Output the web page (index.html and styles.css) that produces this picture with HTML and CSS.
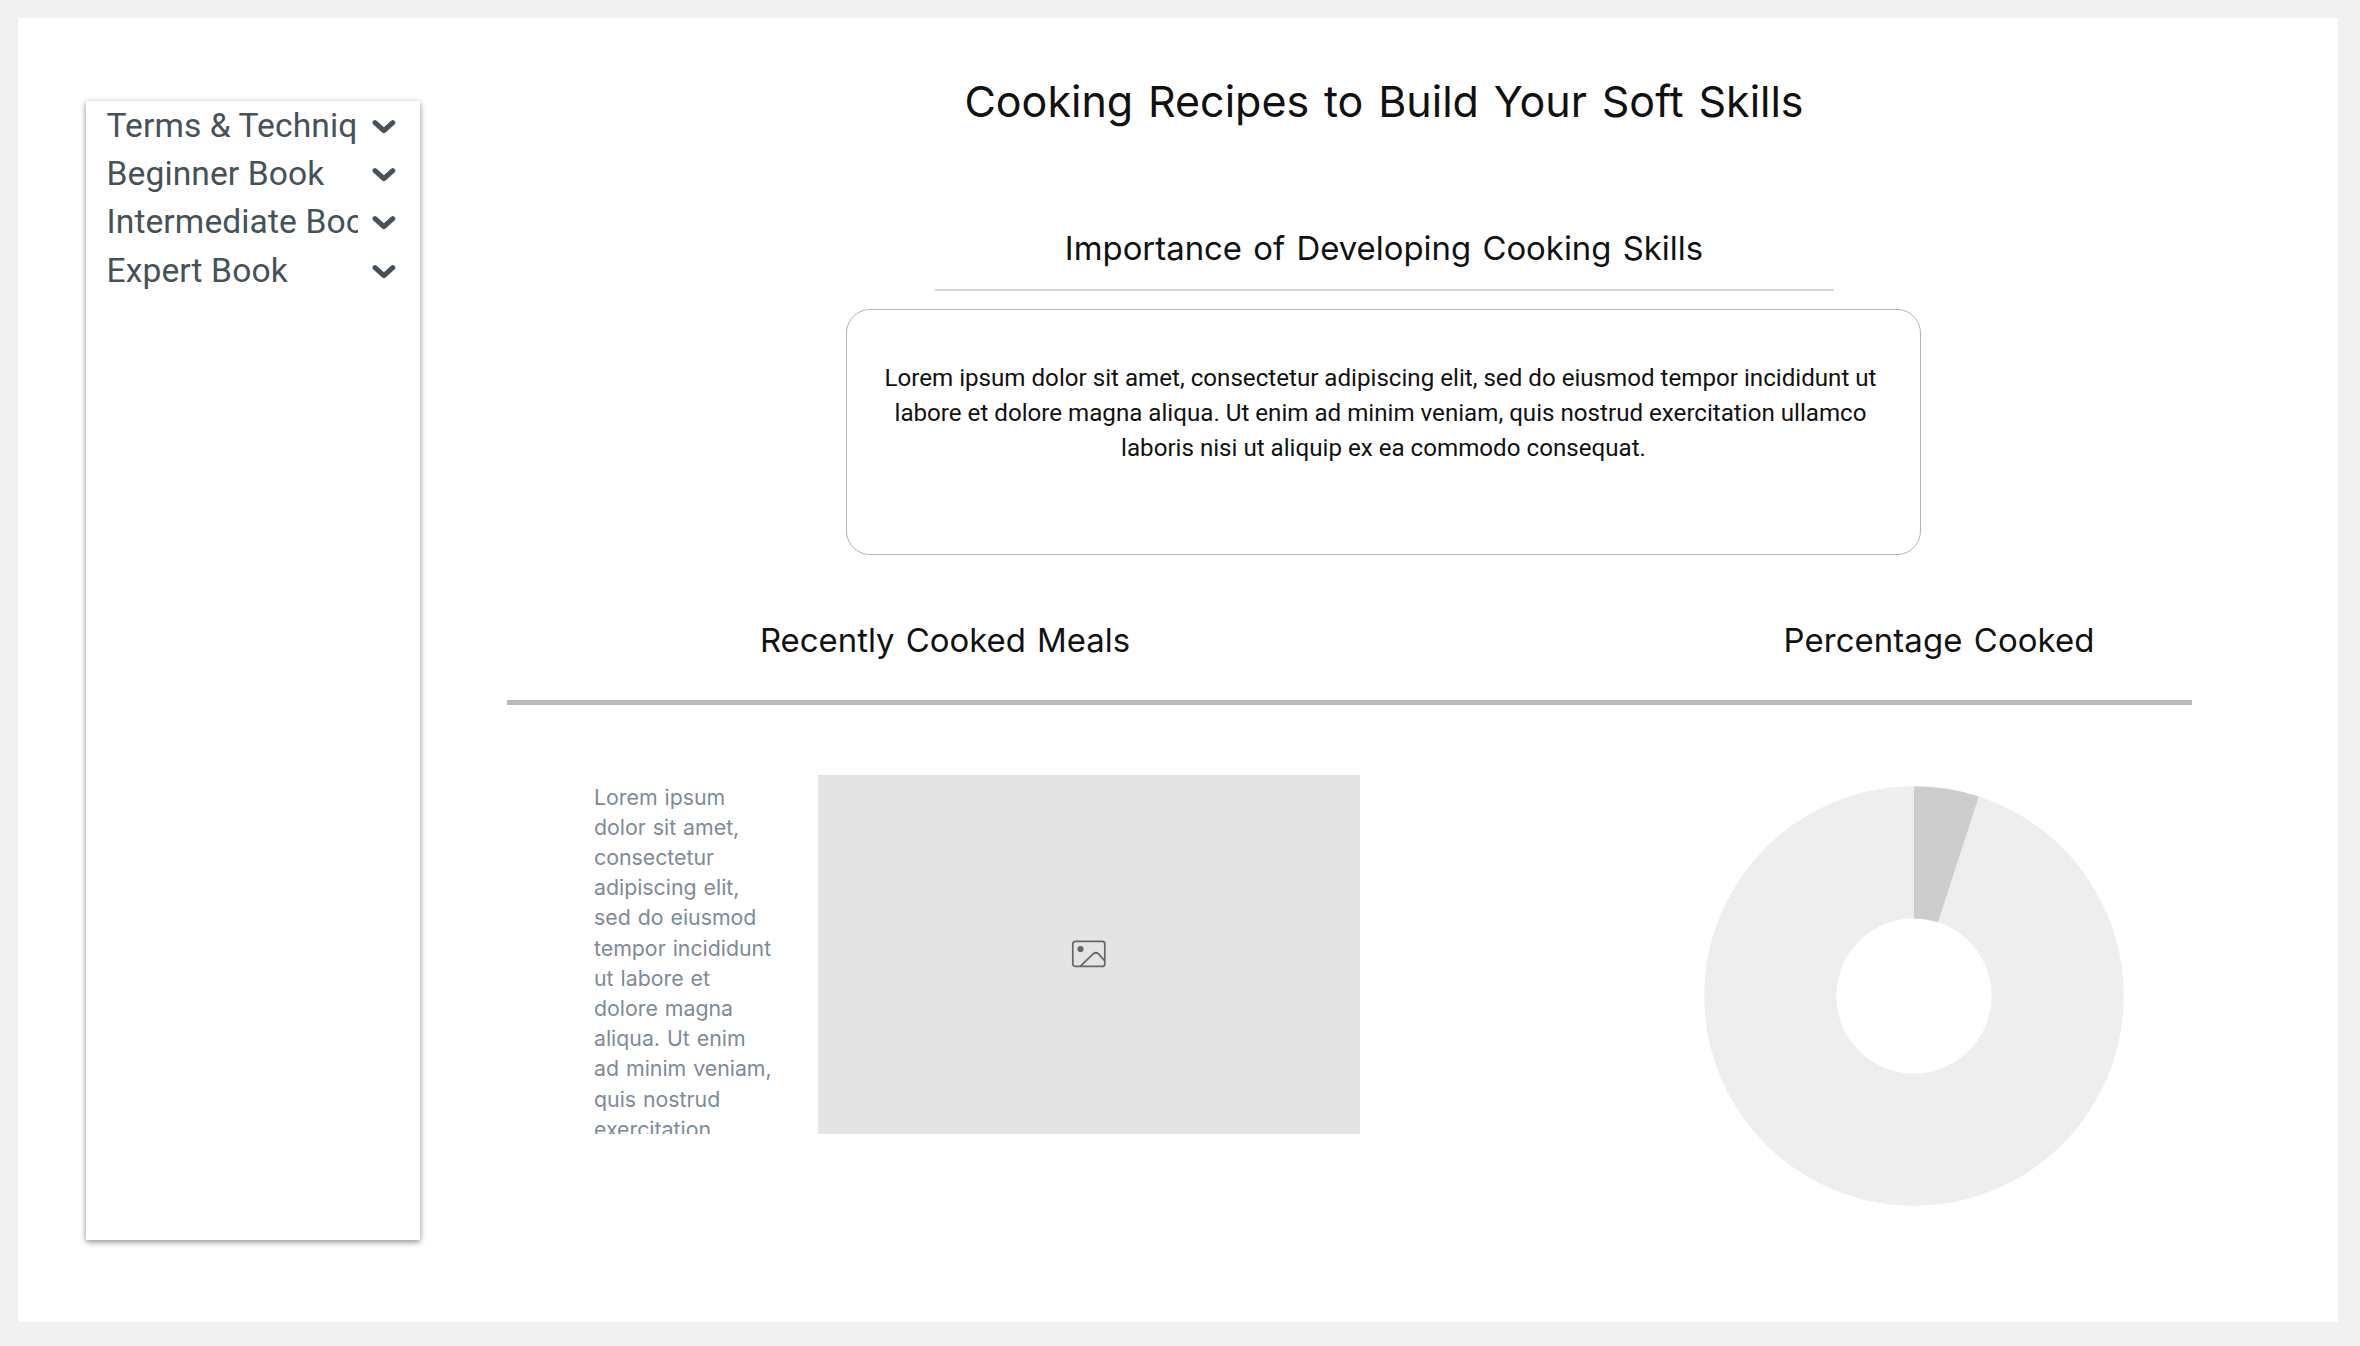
FILE: index.html
```html
<!DOCTYPE html>
<html lang="en">
<head>
<meta charset="utf-8">
<title>Cooking Recipes to Build Your Soft Skills</title>
<link rel="stylesheet" href="styles.css">
</head>
<body>
<svg class="sprite" aria-hidden="true">
  <symbol id="chevron" viewBox="0 0 24 16"><path d="M3 3.6l8.900 8.100L20.800 3.600" fill="none" stroke="currentColor" stroke-width="5" stroke-linecap="round" stroke-linejoin="round"/></symbol>
</svg>
<div class="page">
  <nav class="sidebar">
    <a class="item"><span class="label">Terms &amp; Techniques</span><svg class="chevron"><use href="#chevron"/></svg></a>
    <a class="item"><span class="label">Beginner Book</span><svg class="chevron"><use href="#chevron"/></svg></a>
    <a class="item"><span class="label">Intermediate Book</span><svg class="chevron"><use href="#chevron"/></svg></a>
    <a class="item"><span class="label">Expert Book</span><svg class="chevron"><use href="#chevron"/></svg></a>
  </nav>
  <main class="main">
    <header class="hero">
      <h1 class="title">Cooking Recipes to Build Your Soft Skills</h1>
      <h2 class="heading intro-heading">Importance of Developing Cooking Skills</h2>
      <div class="rule"></div>
      <p class="card">Lorem ipsum dolor sit amet, consectetur adipiscing elit, sed do eiusmod tempor incididunt ut&nbsp;<br>labore et dolore magna aliqua. Ut enim ad minim veniam, quis nostrud exercitation ullamco&nbsp;<br>laboris nisi ut aliquip ex ea commodo consequat.</p>
    </header>
    <div class="headings">
      <h2 class="heading meals-heading">Recently Cooked Meals</h2>
      <h2 class="heading percent-heading">Percentage Cooked</h2>
    </div>
    <div class="divider"></div>
    <div class="content">
      <p class="summary">Lorem ipsum<br>dolor sit amet,<br>consectetur<br>adipiscing elit,<br>sed do eiusmod<br>tempor incididunt<br>ut labore et<br>dolore magna<br>aliqua. Ut enim<br>ad minim veniam,<br>quis nostrud<br>exercitation</p>
      <div class="photo">
        <svg class="photo-icon" viewBox="0 0 36 28" fill="none" stroke="#666" stroke-width="1.700" stroke-linejoin="round">
          <rect x="1.800" y="1.400" width="32" height="25" rx="2.500"/>
          <circle cx="9.500" cy="9" r="3.100" fill="#666" stroke="none"/>
          <path d="M9.500 26.200L22.200 13.900Q25 11.600 27.600 13.900L33.800 21"/>
        </svg>
      </div>
      <svg class="donut" viewBox="-210 -210 420 420">
        <circle r="143.700" fill="none" stroke="#eee" stroke-width="132.200"/>
        <path d="M0 -209.800A209.800 209.800 0 0 1 64.830 -199.530L23.980 -73.800A77.600 77.600 0 0 0 0 -77.600Z" fill="#cdcdcd"/>
      </svg>
    </div>
  </main>
</div>
</body>
</html>
```
FILE: styles.css
```css
* { box-sizing: border-box; }

body {
  margin: 0;
  padding: 17.5px 22px 24px 18px;
  height: 1346px;
  background: #f1f1f1;
  overflow: hidden;
  font-family: Inter, "Liberation Sans", sans-serif;
}

h1, h2, p { margin: 0; font-weight: 400; }

.sprite { display: none; }

.page {
  display: flex;
  align-items: flex-start;
  height: 1304.500px;
  background: #fff;
}

.sidebar {
  width: 334px;
  height: 1139px;
  margin: 83.500px 0 0 68px;
  padding: 0 24px 0 20.500px;
  background: #fff;
  box-shadow: 0 2px 6px rgba(0, 0, 0, .45);
  color: #445259;
  font: 33.600px/49px Roboto, sans-serif;
  letter-spacing: .1px;
}

.item {
  display: flex;
  align-items: center;
  justify-content: space-between;
  height: 48.300px;
}

.label {
  width: 251px;
  overflow: hidden;
  white-space: nowrap;
}

.chevron {
  width: 24px;
  height: 16px;
  margin-top: 3px;
}

.main {
  width: 1754px;
  margin-left: 87px;
}

.hero {
  display: flex;
  flex-direction: column;
  align-items: center;
  padding-top: 53.500px;
}

.title {
  color: #111;
  font-size: 43px;
  line-height: 60px;
  word-spacing: 2.700px;
}

.heading {
  color: #111;
  font-size: 32.900px;
  line-height: 48px;
  word-spacing: 2px;
  white-space: nowrap;
}

.intro-heading { margin-top: 92.500px; }

.rule {
  width: 899px;
  height: 2px;
  margin: 17.500px 0 18px;
  background: #d5d5d5;
}

.card {
  width: 1075px;
  height: 246px;
  margin-right: 1px;
  padding-top: 51px;
  border: 1px solid #b4b4b4;
  border-radius: 24px;
  color: #111;
  font: 24.150px/35px Roboto, sans-serif;
  text-align: center;
}

.headings {
  display: flex;
  width: 1685px;
  margin-top: 60.500px;
}

.meals-heading { width: 876px; text-align: center; }
.percent-heading { margin-left: 400.500px; letter-spacing: .1px; }

.divider {
  width: 1685px;
  height: 5px;
  margin: 36px 0 70px;
  background: #bababa;
}

.content {
  display: flex;
  align-items: flex-start;
  padding-left: 87px;
}

.summary {
  width: 224px;
  height: 359px;
  padding-top: 7px;
  overflow: hidden;
  color: #7d8a99;
  font-size: 21.300px;
  line-height: 30.200px;
  word-spacing: 1px;
}

.photo {
  display: grid;
  place-items: center;
  width: 542px;
  height: 359px;
  background: #e4e4e4;
}

.photo-icon { width: 36px; height: 28px; }

.donut {
  width: 420px;
  height: 420px;
  margin: 11px 0 0 344px;
}
```
